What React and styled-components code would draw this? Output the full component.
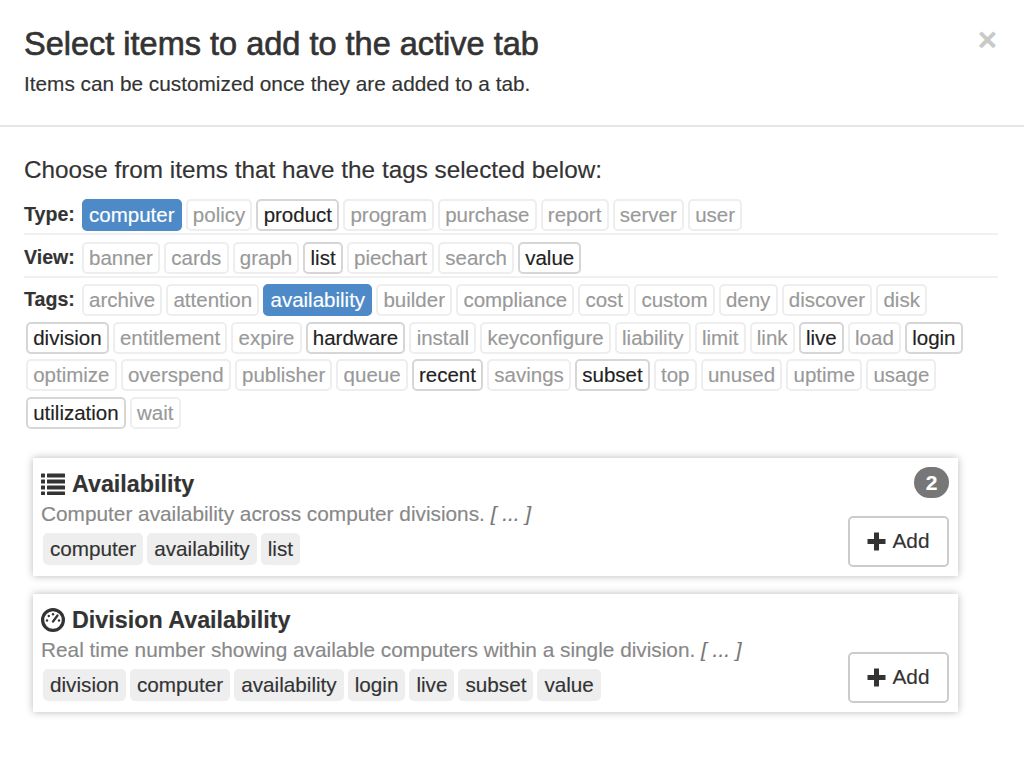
import React from "react";
import styled, { createGlobalStyle } from "styled-components";

const Global = createGlobalStyle`
  html, body { margin: 0; padding: 0; background: #fff; }
  body { font-family: "Liberation Sans", Arial, sans-serif; color: #333; -webkit-text-stroke: 0.15px currentColor; }
`;
const Page = styled.div`width: 1024px; height: 760px; overflow: hidden; position: relative;`;
const Header = styled.header`
  border-bottom: 2px solid #e5e5e5; padding: 27px 24px 0; box-sizing: border-box;
  height: 127px; display: flex; justify-content: space-between; align-items: flex-start;
`;
const Title = styled.h1`
  margin: 0; font-size: 32.5px; line-height: 34px; font-weight: 400; color: #333;
  -webkit-text-stroke: 0.65px #333;
`;
const Sub = styled.p`margin: 9px 0 0; font-size: 20.8px; line-height: 28px; color: #333;`;
const Close = styled.span`
  font-size: 33px; line-height: 26px; font-weight: 700; color: #c9c9c9; margin-right: 3px;
`;
const Body = styled.main`padding: 28px 26px 0 24px;`;
const Choose = styled.h2`margin: 0 0 14px; font-size: 24.3px; line-height: 30px; font-weight: 400; color: #333;`;
const Group = styled.section`
  display: flex; flex-wrap: wrap; row-gap: 5.6px; padding-bottom: 2px; margin-bottom: 6.5px;
  border-bottom: ${(p) => (p.$last ? "none" : "2px solid #f0f0f0")};
`;
const Label = styled.b`font-size: 19.6px; line-height: 31px; color: #333; margin-right: 5px;`;
const Tag = styled.span`
  box-sizing: border-box; height: 32px; line-height: 28px; padding: 0 5.2px; margin: 0 2px; font-size: 20.5px; border-radius: 5px;
  border: 2px solid ${(p) => (p.$state === "on" ? "#4e8ac8" : p.$state === "avail" ? "#d6d6d6" : "#eee")};
  background: ${(p) => (p.$state === "on" ? "#4e8ac8" : "#fff")};
  color: ${(p) => (p.$state === "on" ? "#fff" : p.$state === "avail" ? "#222" : "#999")};
`;
const Cards = styled.div`display: flex; flex-direction: column; gap: 18px; margin: 27px 40px 0 9px;`;
const Card = styled.article`
  position: relative; height: 118px; box-sizing: border-box; padding: 10px 8px 0; background: #fff;
  box-shadow: 0 0 8px rgba(0,0,0,.28);
`;
const CardTitle = styled.h3`
  margin: 0; display: flex; align-items: center; gap: 7px; font-size: 23.3px; line-height: 32px; color: #333; font-weight: 700;
  svg { flex: none; }
`;
const Desc = styled.p`margin: -1px 0 0; font-size: 20.8px; line-height: 29px; color: #888; i { color: #777; }`;
const CardTags = styled.div`display: flex; gap: 4px; margin: 5px 0 0 2px;`;
const Chip = styled.span`
  height: 32px; line-height: 32px; padding: 0 7px; background: #eee; border-radius: 5px; font-size: 20.7px; color: #333;
`;
const Badge = styled.span`
  position: absolute; top: 9px; right: 9px; width: 35px; height: 31px; border-radius: 16px; background: #777; color: #fff;
  font-size: 21px; font-weight: 700; line-height: 31px; text-align: center;
`;
const AddBtn = styled.button`
  position: absolute; right: 9px; bottom: 9px; width: 101px; height: 51px; box-sizing: border-box; padding: 0;
  display: flex; align-items: center; justify-content: center; gap: 6px;
  background: #fff; border: 2px solid #ccc; border-radius: 5px; font: 20.8px "Liberation Sans", Arial, sans-serif; color: #333;
`;

const ListIcon = () => (
  <svg width="24" height="24" viewBox="0 0 24 24" fill="#333">
    <rect x="0" y="1.5" width="4" height="4" rx=".6" /><rect x="0" y="7.5" width="4" height="4" rx=".6" />
    <rect x="0" y="13.5" width="4" height="4" rx=".6" /><rect x="0" y="19.5" width="4" height="3.5" rx=".6" />
    <rect x="6" y="1.5" width="18" height="4" rx=".6" /><rect x="6" y="7.5" width="18" height="4" rx=".6" />
    <rect x="6" y="13.5" width="18" height="4" rx=".6" /><rect x="6" y="19.5" width="18" height="3.5" rx=".6" />
  </svg>
);
const GaugeIcon = () => (
  <svg width="24" height="24" viewBox="0 0 24 24">
    <circle cx="12" cy="12" r="10.4" fill="none" stroke="#333" strokeWidth="3.2" />
    <path d="M12 13.5 L16.5 7.5" stroke="#333" strokeWidth="2.2" strokeLinecap="round" />
    <g fill="#333"><circle cx="12" cy="6.2" r="1.2" /><circle cx="7.8" cy="8" r="1.2" /><circle cx="6" cy="12.5" r="1.2" /><circle cx="18" cy="12.5" r="1.2" /></g>
  </svg>
);
const PlusIcon = () => (
  <svg width="19" height="19" viewBox="0 0 19 19" fill="#333"><path d="M7 0.5h5v6.5h6.5v5H12v6.5H7V12H0.5V7H7z" /></svg>
);

const groups = [
  ["Type:", [["computer","on"],["policy"],["product","avail"],["program"],["purchase"],["report"],["server"],["user"]]],
  ["View:", [["banner"],["cards"],["graph"],["list","avail"],["piechart"],["search"],["value","avail"]]],
  ["Tags:", [["archive"],["attention"],["availability","on"],["builder"],["compliance"],["cost"],["custom"],["deny"],["discover"],["disk"],
    ["division","avail"],["entitlement"],["expire"],["hardware","avail"],["install"],["keyconfigure"],["liability"],["limit"],["link"],["live","avail"],["load"],["login","avail"],
    ["optimize"],["overspend"],["publisher"],["queue"],["recent","avail"],["savings"],["subset","avail"],["top"],["unused"],["uptime"],["usage"],
    ["utilization","avail"],["wait"]]],
];
const cards = [
  { icon: <ListIcon />, title: "Availability", desc: "Computer availability across computer divisions.", tags: ["computer","availability","list"], badge: 2 },
  { icon: <GaugeIcon />, title: "Division Availability", desc: "Real time number showing available computers within a single division.", tags: ["division","computer","availability","login","live","subset","value"] },
];

export default function App() {
  return (
    <Page>
      <Global />
      <Header>
        <div>
          <Title>Select items to add to the active tab</Title>
          <Sub>Items can be customized once they are added to a tab.</Sub>
        </div>
        <Close>×</Close>
      </Header>
      <Body>
        <Choose>Choose from items that have the tags selected below:</Choose>
        {groups.map(([label, tags], i) => (
          <Group key={label} $last={i === 2}>
            <Label>{label}</Label>
            {tags.map(([t, s]) => <Tag key={t} $state={s}>{t}</Tag>)}
          </Group>
        ))}
        <Cards>
          {cards.map((c) => (
            <Card key={c.title}>
              <CardTitle>{c.icon}{c.title}</CardTitle>
              <Desc>{c.desc} <i>[ ... ]</i></Desc>
              <CardTags>{c.tags.map((t) => <Chip key={t}>{t}</Chip>)}</CardTags>
              {c.badge && <Badge>{c.badge}</Badge>}
              <AddBtn><PlusIcon />Add</AddBtn>
            </Card>
          ))}
        </Cards>
      </Body>
    </Page>
  );
}
